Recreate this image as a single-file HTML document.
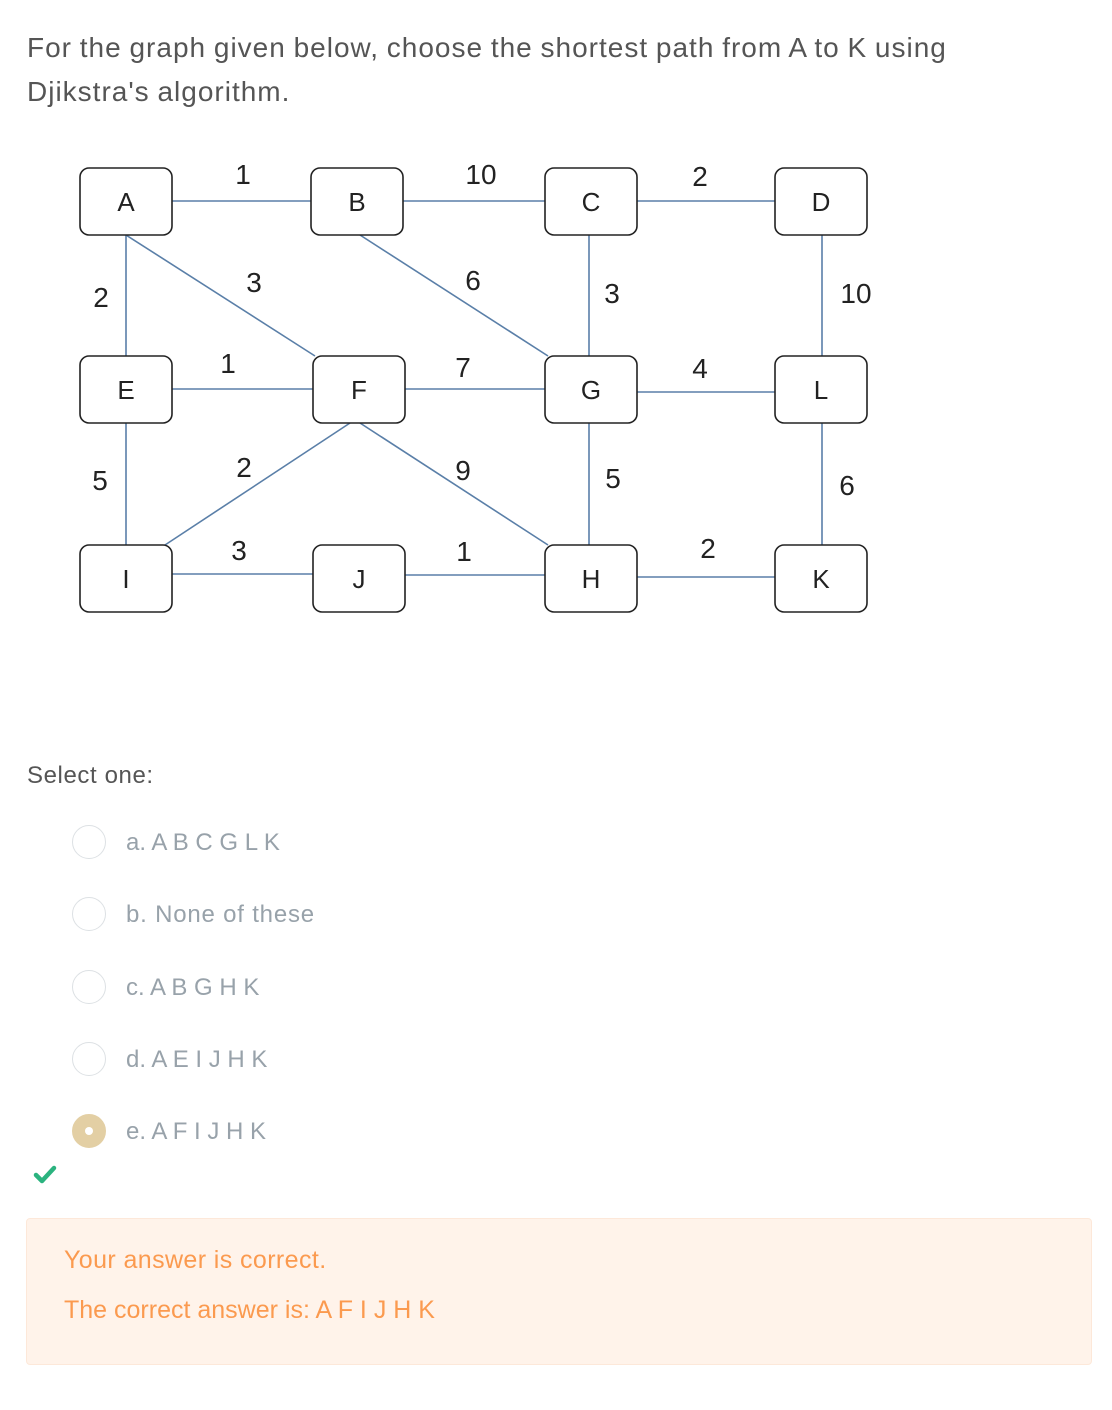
<!DOCTYPE html>
<html><head><style>
body{margin:0;background:#fff;font-family:"Liberation Sans",sans-serif;width:1112px;height:1410px;position:relative;overflow:hidden}
.q{position:absolute;left:27px;top:26px;font-size:28px;line-height:44px;color:#555;letter-spacing:1px;word-spacing:-1px}
.sel{position:absolute;left:27px;top:762px;font-size:24px;color:#555;letter-spacing:0.6px}
.opt{position:absolute;left:72px;font-size:24px;color:#98a2aa;height:36px;line-height:36px}
.opt .r{position:absolute;left:0;top:0;width:34px;height:34px;border:1px solid #dde1e4;border-radius:50%;box-sizing:border-box}
.opt span{position:absolute;left:54px;white-space:nowrap}
.fb{position:absolute;left:26px;top:1218px;width:1066px;height:147px;background:#fff3ea;border-radius:4px;border:1px solid #fde8d9;box-sizing:border-box;color:#fb9a4f;font-size:25px}
</style></head><body>
<div class="q">For the graph given below, choose the shortest path from A to K using<br>Djikstra's algorithm.</div>
<svg width="1112" height="700" style="position:absolute;left:0;top:0" font-family="Liberation Sans, sans-serif" font-size="28" fill="#222">
<g stroke="#5a7fa8" stroke-width="1.6" fill="none">
<line x1="172" y1="201" x2="311" y2="201"/><line x1="403" y1="201" x2="545" y2="201"/><line x1="637" y1="201" x2="775" y2="201"/>
<line x1="126" y1="235" x2="126" y2="356"/><line x1="126" y1="235" x2="315" y2="356"/><line x1="360" y1="235" x2="548" y2="356"/>
<line x1="589" y1="235" x2="589" y2="356"/><line x1="822" y1="235" x2="822" y2="356"/>
<line x1="172" y1="389" x2="313" y2="389"/><line x1="405" y1="389" x2="545" y2="389"/><line x1="637" y1="392" x2="775" y2="392"/>
<line x1="126" y1="423" x2="126" y2="545"/><line x1="350" y1="423" x2="165" y2="545"/><line x1="360" y1="423" x2="548" y2="545"/>
<line x1="589" y1="423" x2="589" y2="545"/><line x1="822" y1="423" x2="822" y2="545"/>
<line x1="172" y1="574" x2="313" y2="574"/><line x1="405" y1="575" x2="545" y2="575"/><line x1="637" y1="577" x2="775" y2="577"/>
</g>
<g stroke="#222" stroke-width="1.6" fill="#fff">
<rect x="80" y="168" width="92" height="67" rx="9"/><rect x="311" y="168" width="92" height="67" rx="9"/><rect x="545" y="168" width="92" height="67" rx="9"/><rect x="775" y="168" width="92" height="67" rx="9"/>
<rect x="80" y="356" width="92" height="67" rx="9"/><rect x="313" y="356" width="92" height="67" rx="9"/><rect x="545" y="356" width="92" height="67" rx="9"/><rect x="775" y="356" width="92" height="67" rx="9"/>
<rect x="80" y="545" width="92" height="67" rx="9"/><rect x="313" y="545" width="92" height="67" rx="9"/><rect x="545" y="545" width="92" height="67" rx="9"/><rect x="775" y="545" width="92" height="67" rx="9"/>
</g>
<g text-anchor="middle" font-size="26">
<text x="126" y="211">A</text><text x="357" y="211">B</text><text x="591" y="211">C</text><text x="821" y="211">D</text>
<text x="126" y="399">E</text><text x="359" y="399">F</text><text x="591" y="399">G</text><text x="821" y="399">L</text>
<text x="126" y="588">I</text><text x="359" y="588">J</text><text x="591" y="588">H</text><text x="821" y="588">K</text>
</g>
<g text-anchor="middle" font-size="28">
<text x="243" y="184">1</text><text x="481" y="184">10</text><text x="700" y="186">2</text>
<text x="101" y="307">2</text><text x="254" y="292">3</text><text x="473" y="290">6</text><text x="612" y="303">3</text><text x="856" y="303">10</text>
<text x="228" y="373">1</text><text x="463" y="377">7</text><text x="700" y="378">4</text>
<text x="100" y="490">5</text><text x="244" y="477">2</text><text x="463" y="480">9</text><text x="613" y="488">5</text><text x="847" y="495">6</text>
<text x="239" y="560">3</text><text x="464" y="561">1</text><text x="708" y="558">2</text>
</g>
</svg>
<div class="sel">Select one:</div>
<div class="opt" style="top:825px"><div class="r"></div><span>a. A B C G L K</span></div>
<div class="opt" style="top:897px"><div class="r"></div><span style="letter-spacing:0.8px">b. None of these</span></div>
<div class="opt" style="top:970px"><div class="r"></div><span>c. A B G H K</span></div>
<div class="opt" style="top:1042px"><div class="r"></div><span>d. A E I J H K</span></div>
<div class="opt" style="top:1114px"><div class="r" style="background:#e3cfa4;border-color:#e3cfa4"><div style="position:absolute;left:12px;top:12px;width:8px;height:8px;border-radius:50%;background:#fff"></div></div><span>e. A F I J H K</span></div>
<svg style="position:absolute;left:33px;top:1164px" width="24" height="22"><path d="M3 11 L9 17 L21 4" stroke="#2bb37f" stroke-width="4.5" fill="none" stroke-linecap="round" stroke-linejoin="round"/></svg>
<div class="fb"><div style="position:absolute;left:37px;top:27px;letter-spacing:0.4px">Your answer is correct.</div><div style="position:absolute;left:37px;top:77px">The correct answer is: A F I J H K</div></div>
</body></html>
